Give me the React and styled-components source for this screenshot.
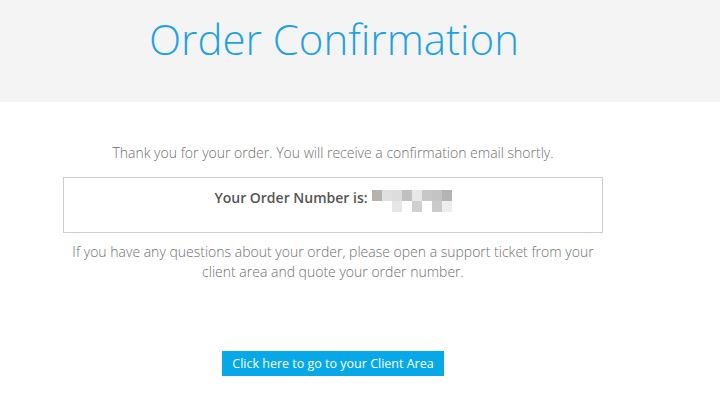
import React from 'react';
import styled, { createGlobalStyle } from 'styled-components';

const GlobalStyle = createGlobalStyle`
  html, body {
    margin: 0;
    padding: 0;
    background: #fff;
  }
  body {
    font-family: "Open Sans", "Liberation Sans", sans-serif;
    color: #777;
  }
`;

const Header = styled.header`
  height: 102px;
  background: #f4f4f4;
  box-sizing: border-box;
  padding-left: 149px;
`;

const Title = styled.h1`
  margin: 0;
  padding-top: 11px;
  font-size: 42px;
  font-weight: 300;
  line-height: 56px;
  color: #1fa3e0;
`;

const Content = styled.main`
  width: 540px;
  margin-left: 63px;
  padding-top: 41px;
  text-align: center;
  font-size: 14px;
  font-weight: 300;
  line-height: 20px;
  color: #707070;
`;

const Lead = styled.p`
  margin: 0 0 14px;
`;

const OrderBox = styled.div`
  height: 56px;
  box-sizing: border-box;
  border: 1px solid #ccc;
  padding-top: 9px;
  display: flex;
  justify-content: center;
  align-items: flex-start;
`;

const OrderLabel = styled.strong`
  font-weight: 600;
  color: #555;
  line-height: 22px;
  margin-right: 4px;
`;

const Pixelated = styled.span`
  display: grid;
  grid-template-columns: repeat(8, 10px);
  grid-auto-rows: 11px;
  margin-top: 3px;
`;

const Pixel = styled.span`
  background: ${(p) => p.$c};
`;

const Note = styled.p`
  margin: 9px 0 0;
`;

const Actions = styled.div`
  margin-top: 69px;
  display: flex;
  justify-content: center;
`;

const ClientButton = styled.a`
  display: inline-block;
  background: #07a8e8;
  color: #fff;
  font-size: 12.5px;
  font-weight: 400;
  line-height: 25px;
  padding: 0 10px;
  text-decoration: none;
`;

const pixels = [
  '#b8b2ad', '#e0e0e0', '#dddddd', '#c0c0c0', '#e8e8e8', '#c7c7c7', '#c4c4c4', '#b4b4b4',
  '#ffffff', '#ffffff', '#e6e6e6', '#ffffff', '#d0d0d0', '#ffffff', '#cacaca', '#eeeeee',
];

export default function App() {
  return (
    <>
      <GlobalStyle />
      <Header>
        <Title>Order Confirmation</Title>
      </Header>
      <Content>
        <Lead>Thank you for your order. You will receive a confirmation email shortly.</Lead>
        <OrderBox>
          <OrderLabel>Your Order Number is:</OrderLabel>
          <Pixelated>
            {pixels.map((c, i) => (
              <Pixel key={i} $c={c} />
            ))}
          </Pixelated>
        </OrderBox>
        <Note>
          If you have any questions about your order, please open a support ticket from your
          client area and quote your order number.
        </Note>
        <Actions>
          <ClientButton href="#">Click here to go to your Client Area</ClientButton>
        </Actions>
      </Content>
    </>
  );
}
